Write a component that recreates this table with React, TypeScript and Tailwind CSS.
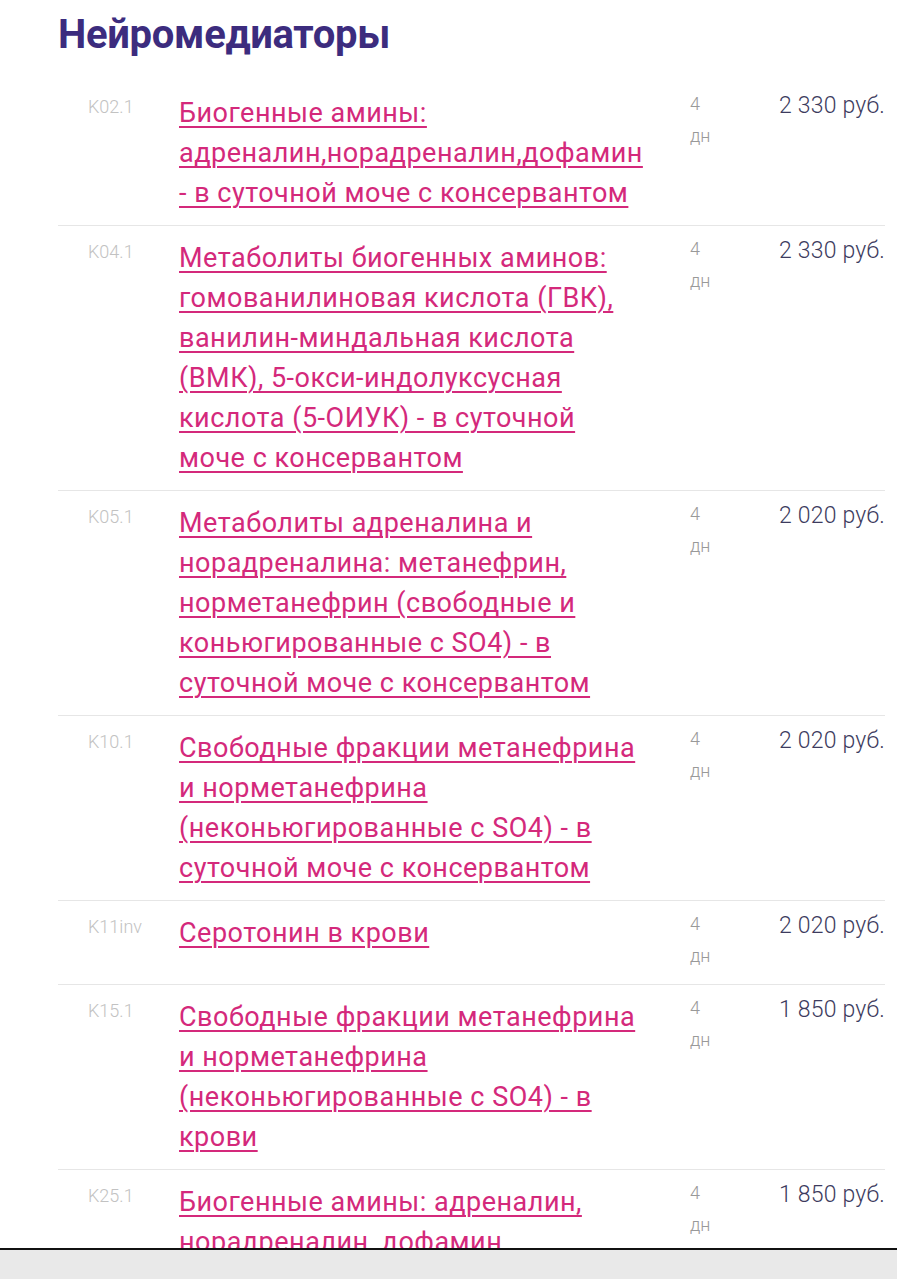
const rows = [
  {
    code: "K02.1",
    lines: ["Биогенные амины:", "адреналин,норадреналин,дофамин", "- в суточной моче с консервантом"],
    price: "2 330 руб.",
  },
  {
    code: "K04.1",
    lines: [
      "Метаболиты биогенных аминов:",
      "гомованилиновая кислота (ГВК),",
      "ванилин-миндальная кислота",
      "(ВМК), 5-окси-индолуксусная",
      "кислота (5-ОИУК) - в суточной",
      "моче с консервантом",
    ],
    price: "2 330 руб.",
  },
  {
    code: "K05.1",
    lines: [
      "Метаболиты адреналина и",
      "норадреналина: метанефрин,",
      "норметанефрин (свободные и",
      "коньюгированные с SO4) - в",
      "суточной моче с консервантом",
    ],
    price: "2 020 руб.",
  },
  {
    code: "K10.1",
    lines: [
      "Свободные фракции метанефрина",
      "и норметанефрина",
      "(неконьюгированные с SO4) - в",
      "суточной моче с консервантом",
    ],
    price: "2 020 руб.",
  },
  {
    code: "K11inv",
    lines: ["Серотонин в крови"],
    price: "2 020 руб.",
  },
  {
    code: "K15.1",
    lines: [
      "Свободные фракции метанефрина",
      "и норметанефрина",
      "(неконьюгированные с SO4) - в",
      "крови",
    ],
    price: "1 850 руб.",
  },
  {
    code: "K25.1",
    lines: ["Биогенные амины: адреналин,", "норадреналин, дофамин,", "серотонин - в плазме крови"],
    price: "1 850 руб.",
  },
];

export default function App() {
  return (
    <div className="w-[897px] h-[1279px] bg-white flex flex-col font-['Roboto',sans-serif]">
      <div className="h-[1248px] overflow-hidden pl-[58px] pr-[12px]">
        <h1 className="pt-[11px] text-[40px] leading-[48px] font-bold text-[#3c2c7e] tracking-[-0.3px]">
          Нейромедиаторы
        </h1>

        <div className="mt-[22px]">
          {rows.map((r, i) => (
            <div
              key={r.code}
              className={
                "grid grid-cols-[121px_511px_1fr_auto] py-[12px] " +
                (i < rows.length - 1 ? "border-b border-[#e6e6e6]" : "")
              }
            >
              {/* code */}
              <div className="pl-[30px] pt-[2px] text-[18px] leading-[24px] font-light text-[#c2c2c2]">
                {r.code}
              </div>

              {/* name */}
              <div className="whitespace-nowrap">
                <a
                  href="#"
                  className="text-[27px] leading-[40px] tracking-[0.5px] text-[#d4297b] underline underline-offset-[4px] decoration-[2px]"
                >
                  {r.lines.map((l, j) => (
                    <span key={j}>
                      {l}
                      {j < r.lines.length - 1 && <br />}
                    </span>
                  ))}
                </a>
              </div>

              {/* days */}
              <div className="-mt-[5px] text-[18px] leading-[32px] font-light text-[#999999]">
                <div>4</div>
                <div>дн</div>
              </div>

              {/* price */}
              <div className="pt-[1px] text-[23px] leading-[24px] font-light tracking-[0.2px] text-[#3d3b5e]">
                {r.price}
              </div>
            </div>
          ))}
        </div>
      </div>
      <div className="flex-1 border-t-2 border-[#111] bg-[#e9e9e9]" />
    </div>
  );
}
